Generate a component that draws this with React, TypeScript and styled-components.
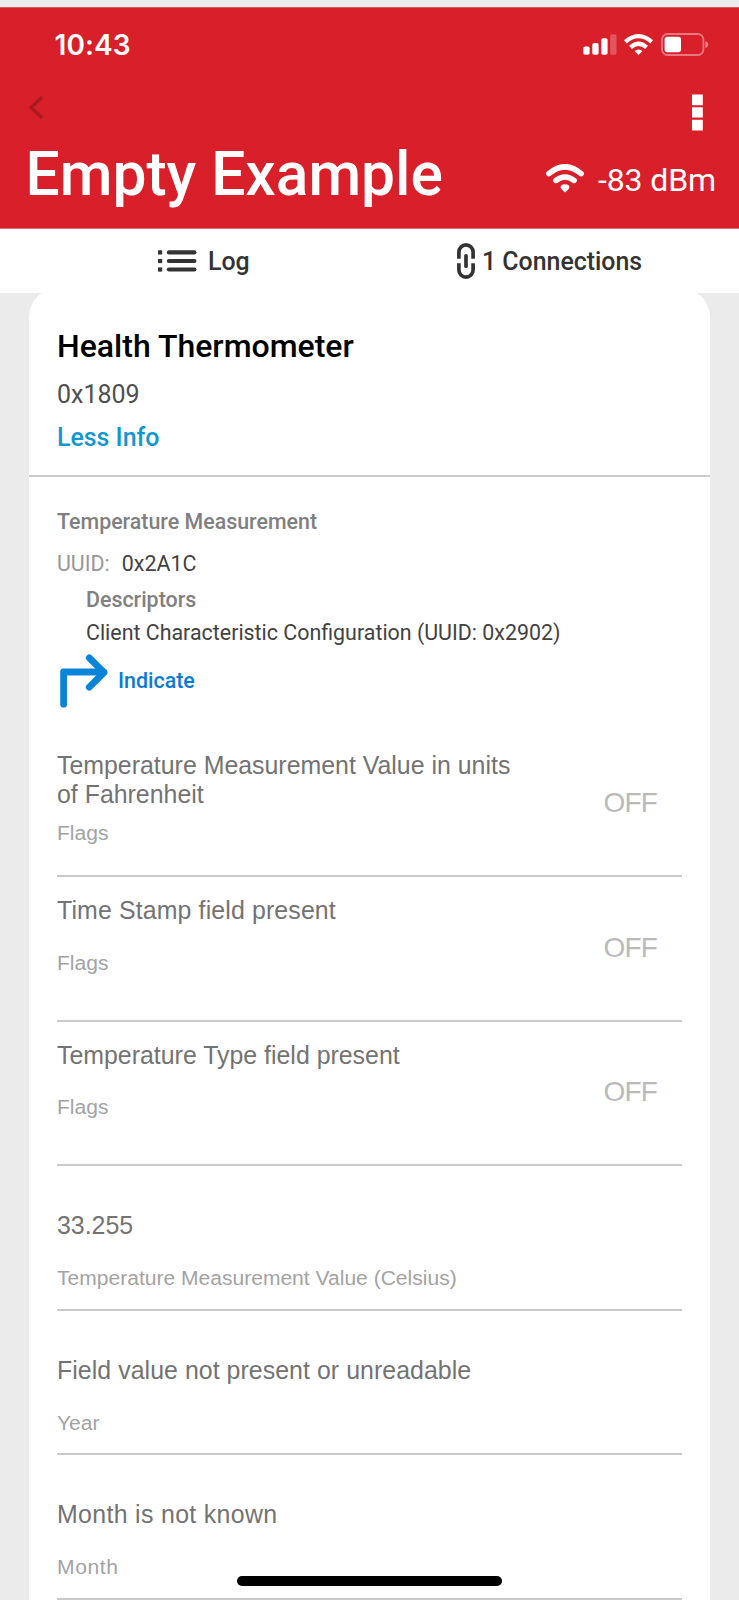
import React from "react";
import styled, { createGlobalStyle } from "styled-components";

const GlobalStyle = createGlobalStyle`
  * { box-sizing: border-box; }
  body { margin: 0; background: #ebebeb; }
`;

const roboto = `Roboto, "Liberation Sans", sans-serif`;
const helvetica = `"Liberation Sans", Arial, sans-serif`;

const Page = styled.div`
  position: relative;
  width: 739px;
  height: 1600px;
  overflow: hidden;
  padding-top: 7px;
  background: #ebebeb;
  font-family: ${roboto};
`;

const Header = styled.header`
  height: 222px;
  padding: 18px 23px 0 28px;
  color: #fff;
  background: #d91f2a;
  border-top: 1px solid #de555d;
  border-bottom: 1px solid #de6a70;
`;

const StatusBar = styled.div`
  display: flex;
  align-items: center;
  height: 37px;
  padding: 0 7px 0 26.5px;
`;

const Clock = styled.span`
  flex: 1;
  font: 600 28px/36px Inter, sans-serif;
  letter-spacing: 0.1px;
`;

const StatusIcons = styled.div`
  display: flex;
  align-items: center;
  gap: 7.7px;
`;

const NavBar = styled.div`
  display: flex;
  justify-content: space-between;
  align-items: flex-start;
  height: 37px;
  margin-top: 31px;
  padding: 0 13px 0 0;
`;

const BackIcon = styled.svg`
  margin-top: 2px;
`;

const TitleBar = styled.div`
  display: flex;
  justify-content: space-between;
  margin-top: 11px;
  height: 64px;
`;

const Title = styled.h1`
  margin: 0 0 0 -2.5px;
  font-size: 60.5px;
  font-weight: 500;
  line-height: 66px;
  white-space: nowrap;
`;

const Signal = styled.div`
  display: flex;
  align-items: center;
  gap: 14px;
  padding-top: 12px;
  font-size: 32px;
  font-weight: 400;
  letter-spacing: -0.1px;
  white-space: nowrap;

  svg {
    margin-top: -4px;
  }
`;

const Tabs = styled.nav`
  display: flex;
  height: 64px;
  padding-left: 158px;
  background: #fff;
`;

const Tab = styled.div<{ $gap: number; $width?: number }>`
  display: flex;
  align-items: center;
  gap: ${(p) => p.$gap}px;
  ${(p) => p.$width && `width: ${p.$width}px;`}
  color: #333;
  font-size: 24.9px;
  font-weight: 500;
  line-height: 30px;
  white-space: nowrap;
`;

const TabLabel = styled.span`
  padding-top: 2px;
`;

const Card = styled.main`
  width: 681px;
  height: 1400px;
  margin: -5px 0 0 29px;
  background: #fff;
  border-radius: 29px 29px 0 0;
`;

const ServiceHead = styled.section`
  height: 189px;
  padding: 38px 28px 0;
  border-bottom: 2px solid #cbcbcb;
`;

const ServiceName = styled.h2`
  margin: 0;
  color: #000;
  font-size: 32px;
  font-weight: 500;
  line-height: 40px;
`;

const ServiceId = styled.div`
  margin-top: 13px;
  color: #4f4f4f;
  font-size: 25px;
  line-height: 32px;
`;

const InfoLink = styled.a`
  display: block;
  margin-top: 11px;
  color: #1197d6;
  font-size: 24.9px;
  font-weight: 500;
  line-height: 32px;
`;

const Characteristic = styled.section`
  height: 255.4px;
  padding: 30.5px 28px 0;
  font-size: 21.4px;
  line-height: 28px;
  color: #424242;
`;

const Caption = styled.div`
  color: #808080;
  font-weight: 500;
`;

const UuidRow = styled.div`
  display: flex;
  gap: 12px;
  margin-top: 14px;
`;

const Muted = styled.span`
  color: #979797;
`;

const Descriptors = styled.div`
  display: flex;
  flex-direction: column;
  gap: 5px;
  margin-top: 8.4px;
  padding-left: 29px;
  white-space: nowrap;
`;

const Action = styled.div`
  display: flex;
  align-items: center;
  gap: 9px;
  margin-top: 6.8px;
  color: #0a7bd3;
  font-weight: 500;
`;

const Fields = styled.section`
  margin: 0 28px;
  font-family: ${helvetica};
`;

const Field = styled.div<{ $toggle?: boolean }>`
  display: flex;
  justify-content: space-between;
  height: 144.6px;
  padding-top: ${(p) => (p.$toggle ? 19.1 : 45)}px;
  border-bottom: 2px solid #cacacc;
`;

const FieldText = styled.div`
  width: 465px;
`;

const FieldValue = styled.div<{ $tracking?: number }>`
  color: #737373;
  font-size: 24.9px;
  letter-spacing: ${(p) => p.$tracking ?? 0}px;
  line-height: 29px;
`;

const FieldLabel = styled.div<{ $tight?: boolean; $tracking?: number }>`
  margin-top: ${(p) => (p.$tight ? 10.7 : 24.8)}px;
  color: #a3a3a3;
  font-size: 21.05px;
  letter-spacing: ${(p) => p.$tracking ?? 0}px;
  line-height: 26px;
`;

const Toggle = styled.div`
  padding: 34.6px 25px 0 0;
  color: #bababa;
  font-size: 28px;
  letter-spacing: -0.8px;
  line-height: 34px;
`;

const HomeIndicator = styled.div`
  position: absolute;
  left: 237px;
  bottom: 14px;
  width: 265px;
  height: 10px;
  border-radius: 5px;
  background: #000;
`;

const CellularIcon = () => (
  <svg width="34" height="21" viewBox="0 0 34 21" fill="#fff">
    <rect x="0.3" y="12.5" width="6.3" height="8.3" rx="1.8" />
    <rect x="9.3" y="9" width="6.3" height="11.8" rx="1.8" />
    <rect x="18.3" y="4.3" width="6.3" height="16.5" rx="1.8" />
    <rect x="27.2" y="0.2" width="6.3" height="20.6" rx="1.8" opacity="0.25" />
  </svg>
);

const WifiIcon = () => (
  <svg width="29" height="21" viewBox="0 0 38 28" preserveAspectRatio="none">
    <g fill="none" stroke="#fff" strokeWidth="5.6">
      <path d="M1.8 10.4 Q19 -4.6 36.2 10.4" />
      <path d="M8.5 17.8 Q19 8.2 29.5 17.8" />
    </g>
    <path d="M13.8 22.8 Q19 18.4 24.2 22.8 L19 28 Z" fill="#fff" />
  </svg>
);

const SignalIcon = () => (
  <svg width="38" height="29" viewBox="0 0 38 29">
    <g fill="none" stroke="#fff" strokeWidth="5.6" strokeLinecap="round">
      <path d="M2.9 9.6 Q19 -4 35.1 9.6" />
      <path d="M9.9 16.4 Q19 9.6 28.1 16.4" />
    </g>
    <path d="M14.6 23.6 Q14.6 20.3 19 20.3 Q23.4 20.3 23.4 23.6 Q23.4 24.8 19 28.4 Q14.6 24.8 14.6 23.6 Z" fill="#fff" />
  </svg>
);

const BatteryIcon = () => (
  <svg width="48" height="23" viewBox="0 0 48 23" fill="none">
    <rect x="1" y="1" width="41.4" height="21" rx="5.5" stroke="#fff" strokeOpacity="0.4" strokeWidth="1.8" />
    <rect x="3.6" y="3.8" width="16.4" height="15.4" rx="2.6" fill="#fff" />
    <path d="M44.3 8 Q47.3 9.2 47.3 11.5 Q47.3 13.8 44.3 15 Z" fill="#fff" fillOpacity="0.45" />
  </svg>
);

const MenuIcon = () => (
  <svg width="11" height="37" viewBox="0 0 11 37" fill="#fff">
    <rect y="0.5" width="10.8" height="10.7" />
    <rect y="13.3" width="10.8" height="10.2" />
    <rect y="25.8" width="10.8" height="10.7" />
  </svg>
);

const ListIcon = () => (
  <svg width="39" height="22" viewBox="0 0 39 22" fill="#333">
    {[0.3, 8.9, 17.4].map((y) => (
      <g key={y}>
        <rect x="0" y={y} width="4.2" height="4.2" />
        <rect x="8.8" y={y} width="29.7" height="4.2" rx="2.1" />
      </g>
    ))}
  </svg>
);

const LinkIcon = () => (
  <svg width="18" height="36" viewBox="0 0 18 36" fill="none" stroke="#333" strokeWidth="3.7">
    <path d="M1.9 15.7 V9 A7.1 7.1 0 0 1 16.1 9 V15.7" />
    <path d="M1.9 20.3 V27 A7.1 7.1 0 0 0 16.1 27 V20.3" />
    <path d="M9 12.8 V23.2" strokeLinecap="round" />
  </svg>
);

const IndicateIcon = () => (
  <svg width="52" height="54" viewBox="0 0 52 54" fill="none" stroke="#0a84d8" strokeWidth="6.8" strokeLinecap="round" strokeLinejoin="round">
    <path d="M6.6 50.2 V18 H46.5" />
    <path d="M32.3 3.8 L47 18.5 L32.3 33.2" />
  </svg>
);

const toggles = [
  { value: "Temperature Measurement Value in units of Fahrenheit", tight: true },
  { value: "Time Stamp field present", tracking: 0.13 },
  { value: "Temperature Type field present" },
];

const readings = [
  { value: "33.255", label: "Temperature Measurement Value (Celsius)" },
  { value: "Field value not present or unreadable", tracking: 0.05, label: "Year" },
  { value: "Month is not known", tracking: 0.33, label: "Month", labelTracking: 0.6 },
];

export default function App() {
  return (
    <Page>
      <GlobalStyle />
      <Header>
        <StatusBar>
          <Clock>10:43</Clock>
          <StatusIcons>
            <CellularIcon />
            <WifiIcon />
            <BatteryIcon />
          </StatusIcons>
        </StatusBar>
        <NavBar>
          <BackIcon width="16" height="23" viewBox="0 0 16 23" fill="none" stroke="#a91a22" strokeWidth="3.4">
            <path d="M14 1.2 L3 11.5 L14 21.8" />
          </BackIcon>
          <MenuIcon />
        </NavBar>
        <TitleBar>
          <Title>Empty Example</Title>
          <Signal>
            <SignalIcon />
            -83 dBm
          </Signal>
        </TitleBar>
      </Header>
      <Tabs>
        <Tab $gap={11} $width={299}>
          <ListIcon />
          <TabLabel>Log</TabLabel>
        </Tab>
        <Tab $gap={7}>
          <LinkIcon />
          <TabLabel>1 Connections</TabLabel>
        </Tab>
      </Tabs>
      <Card>
        <ServiceHead>
          <ServiceName>Health Thermometer</ServiceName>
          <ServiceId>0x1809</ServiceId>
          <InfoLink>Less Info</InfoLink>
        </ServiceHead>
        <Characteristic>
          <Caption>Temperature Measurement</Caption>
          <UuidRow>
            <Muted>UUID:</Muted>
            <span>0x2A1C</span>
          </UuidRow>
          <Descriptors>
            <Caption>Descriptors</Caption>
            <span>Client Characteristic Configuration (UUID: 0x2902)</span>
          </Descriptors>
          <Action>
            <IndicateIcon />
            Indicate
          </Action>
        </Characteristic>
        <Fields>
          {toggles.map((t) => (
            <Field key={t.value} $toggle>
              <FieldText>
                <FieldValue $tracking={t.tracking}>{t.value}</FieldValue>
                <FieldLabel $tight={t.tight}>Flags</FieldLabel>
              </FieldText>
              <Toggle>OFF</Toggle>
            </Field>
          ))}
          {readings.map((r) => (
            <Field key={r.label}>
              <FieldText>
                <FieldValue $tracking={r.tracking}>{r.value}</FieldValue>
                <FieldLabel $tracking={r.labelTracking}>{r.label}</FieldLabel>
              </FieldText>
            </Field>
          ))}
        </Fields>
      </Card>
      <HomeIndicator />
    </Page>
  );
}
